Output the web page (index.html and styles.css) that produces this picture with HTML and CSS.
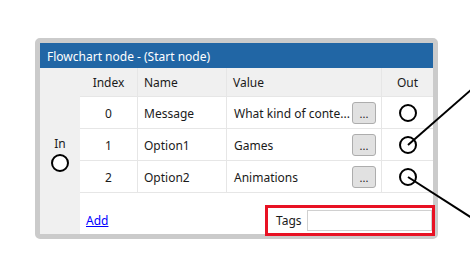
FILE: index.html
```html
<!DOCTYPE html>
<html lang="en">
<head>
    <meta charset="UTF-8">
    <meta name="viewport" content="width=device-width, initial-scale=1.0">
    <title>Flowchart node</title>
    <link rel="stylesheet" href="styles.css">
</head>
<body>

    <!-- Node card -->
    <div class="node">
        <div class="node-title">Flowchart node - (Start node)</div>
        <div class="node-body">
            <div class="in-col">
                <span class="in-label">In</span>
                <span class="port"></span>
            </div>
            <div class="main">
                <div class="grid">
                    <div class="cell head center">Index</div>
                    <div class="cell head">Name</div>
                    <div class="cell head">Value</div>
                    <div class="cell head center last">Out</div>

                    <div class="cell center">0</div>
                    <div class="cell">Message</div>
                    <div class="cell value"><span>What kind of conte...</span><button class="dots">...</button></div>
                    <div class="cell center last"><span class="port"></span></div>

                    <div class="cell center">1</div>
                    <div class="cell">Option1</div>
                    <div class="cell value"><span>Games</span><button class="dots">...</button></div>
                    <div class="cell center last"><span class="port"></span></div>

                    <div class="cell center">2</div>
                    <div class="cell">Option2</div>
                    <div class="cell value"><span>Animations</span><button class="dots">...</button></div>
                    <div class="cell center last"><span class="port"></span></div>
                </div>
                <div class="footer">
                    <a href="#" class="add-link">Add</a>
                    <div class="tags">
                        <span>Tags</span>
                        <input type="text" class="tags-input">
                    </div>
                </div>
            </div>
        </div>
    </div>

    <!-- Connection wires -->
    <svg class="wires" width="470" height="272" viewBox="0 0 470 272">
        <line x1="408" y1="145" x2="472" y2="89" stroke="#000" stroke-width="2"/>
        <line x1="408" y1="177" x2="472" y2="218" stroke="#000" stroke-width="2"/>
    </svg>

</body>
</html>
```

FILE: styles.css
```css
* {
    margin: 0;
    padding: 0;
    box-sizing: border-box;
}

body {
    position: relative;
    width: 470px;
    height: 272px;
    background-color: #fff;
    color: #1a1a1a;
    font-family: 'Segoe UI', 'Noto Sans', sans-serif;
    font-size: 12px;
    overflow: hidden;
}

.node {
    margin: 38px 0 0 35px;
    width: 403px;
    height: 201px;
    border: 5px solid #cbcbcb;
    border-radius: 5px;
    background-color: #fff;
    display: flex;
    flex-direction: column;
}

.node-title {
    height: 25px;
    line-height: 25px;
    padding: 1px 0 0 7px;
    background-color: #2166a5;
    color: #fff;
}

.node-body {
    flex: 1;
    display: flex;
}

.in-col {
    width: 40px;
    background-color: #f0f0f0;
    display: flex;
    flex-direction: column;
    align-items: center;
    justify-content: center;
    gap: 2px;
    padding-top: 4px;
}

.port {
    display: inline-block;
    width: 18px;
    height: 18px;
    border: 2px solid #000;
    border-radius: 50%;
    background-color: #fff;
}

.main {
    flex: 1;
    display: flex;
    flex-direction: column;
}

.grid {
    display: grid;
    grid-template-columns: 58px 89px 155px 51px;
    grid-template-rows: 29px 32px 32px 32px;
}

.cell {
    display: flex;
    align-items: center;
    padding: 1px 0 0 6px;
    border-right: 1px solid #e6e6e6;
    border-bottom: 1px solid #e6e6e6;
    white-space: nowrap;
    overflow: hidden;
}

.cell.head {
    background-color: #f0f0f0;
}

.cell.center {
    justify-content: center;
    padding-left: 0;
}

.cell.last {
    border-right: none;
}

.cell.value {
    justify-content: space-between;
    padding-left: 7px;
    padding-right: 5px;
}

.dots {
    width: 24px;
    height: 22px;
    border: 1px solid #adadad;
    border-radius: 3px;
    background-color: #e1e1e1;
    font-family: inherit;
    font-size: 11px;
    color: #1a1a1a;
}

.footer {
    flex: 1;
    display: flex;
    align-items: center;
    justify-content: space-between;
    padding: 14px 1px 1px 6px;
}

.add-link {
    color: #0000ff;
    text-decoration: underline;
}

.tags {
    width: 164px;
    height: 25px;
    display: flex;
    align-items: center;
    gap: 5px;
    padding-left: 8px;
    outline: 3px solid #e81123;
}

.tags-input {
    width: 125px;
    height: 21px;
    border: 1px solid #d0d0d0;
    background-color: #fff;
}

/* wires lie over the node frame */
.wires {
    position: absolute;
    top: 0;
    left: 0;
    pointer-events: none;
}
```
